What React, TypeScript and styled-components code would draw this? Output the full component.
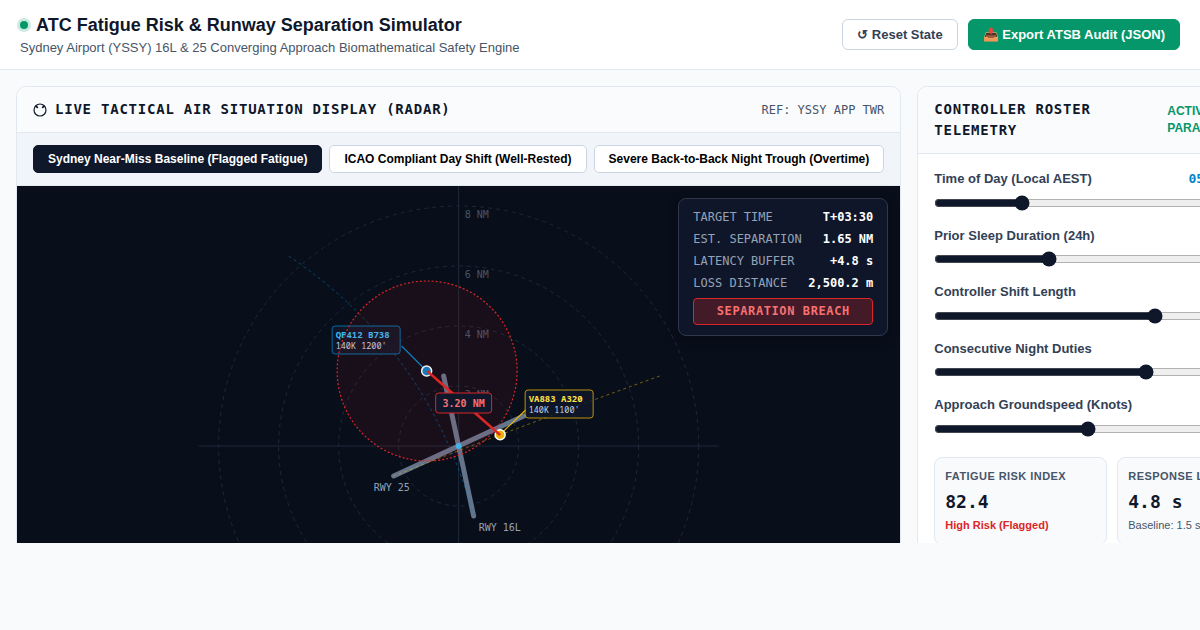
import React from "react";
import styled, { createGlobalStyle } from "styled-components";

const sans = `"Liberation Sans", Arial, sans-serif`;
const mono = `"DejaVu Sans Mono", monospace`;
const tagMono = `"Noto Sans Mono", "DejaVu Sans Mono", monospace`;

const GlobalStyle = createGlobalStyle`
  * { box-sizing: border-box; }
  body {
    margin: 0;
    background: #f8fafc;
    color: #0f172a;
    font-family: ${sans};
    line-height: 1.5;
    overflow: hidden;
  }
`;

const Page = styled.div`
  display: flex;
  flex-direction: column;
  height: 100vh;
  padding-bottom: 87px;
`;

const TopBar = styled.header`
  display: flex;
  align-items: center;
  justify-content: space-between;
  padding: 12px 20px;
  background: #ffffff;
  border-bottom: 1px solid #e2e8f0;
`;

const Brand = styled.div`
  padding-top: 1px;
`;

const Title = styled.h1`
  display: flex;
  align-items: center;
  gap: 8px;
  margin: 0;
  font-size: 18px;
  line-height: 24px;
`;

const StatusDot = styled.span`
  width: 8px;
  height: 8px;
  border-radius: 50%;
  background: #059669;
  box-shadow: 0 0 0 3px rgba(5, 150, 105, 0.2);
`;

const Subtitle = styled.p`
  margin: 2px 0 0;
  font-size: 13px;
  line-height: 18px;
  color: #475569;
`;

const Actions = styled.div`
  display: flex;
  gap: 10px;
`;

const ActionButton = styled.button<{ $primary?: boolean }>`
  padding: 7px 14px;
  border: 1px solid ${(p) => (p.$primary ? "#059669" : "#cbd5e1")};
  border-radius: 6px;
  background: ${(p) => (p.$primary ? "#059669" : "#ffffff")};
  color: ${(p) => (p.$primary ? "#ffffff" : "#334155")};
  font: bold 13px ${sans};
`;

const Workspace = styled.main`
  display: grid;
  grid-template-columns: minmax(max-content, 1fr) 390px;
  align-items: start;
  gap: 16px;
  flex: 1;
  min-height: 0;
  padding: 16px;
  overflow: hidden;
`;

const Panel = styled.section`
  background: #ffffff;
  border: 1px solid #e2e8f0;
  border-radius: 10px;
  overflow: hidden;
`;

const PanelHeader = styled.div`
  display: flex;
  align-items: center;
  justify-content: space-between;
  padding: 12px 16px;
  background: #fafbfd;
  border-bottom: 1px solid #e2e8f0;
`;

const PanelTitle = styled.h2`
  display: flex;
  align-items: center;
  gap: 8px;
  margin: 0;
  font: bold 14px/21px ${mono};
  letter-spacing: 0.055em;
`;

const PanelRef = styled.span`
  font: 12px/18px ${mono};
  color: #475569;
`;

const ActiveTag = styled.span`
  flex: 0 0 123px;
  font-size: 12px;
  line-height: 17px;
  font-weight: bold;
  color: #059669;
`;

const PresetBar = styled.div`
  display: flex;
  gap: 7px;
  padding: 12px 16px;
  background: #f1f5f9;
  border-bottom: 1px solid #e2e8f0;
`;

const PresetButton = styled.button<{ $active?: boolean }>`
  padding: 6px 14px;
  border: 1px solid ${(p) => (p.$active ? "#0f172a" : "#cbd5e1")};
  border-radius: 5px;
  background: ${(p) => (p.$active ? "#0f172a" : "#ffffff")};
  color: ${(p) => (p.$active ? "#ffffff" : "#000000")};
  font: bold 12px ${sans};
  white-space: nowrap;
`;

const RadarView = styled.div`
  position: relative;
  background: #080e1a;
`;

const RadarSvg = styled.svg`
  display: block;
  width: 100%;
  height: 520px;
  font-family: ${mono};
`;

const Hud = styled.div`
  position: absolute;
  top: 12px;
  right: 12px;
  display: flex;
  flex-direction: column;
  gap: 4px;
  width: 210px;
  padding: 9px 14px 10px;
  border: 1px solid #2f394b;
  border-radius: 8px;
  background: #0f1629;
  box-shadow: 0 4px 12px rgba(0, 0, 0, 0.3);
  font: 12px/18px ${mono};
`;

const HudRow = styled.div`
  display: flex;
  justify-content: space-between;
  color: #94a3b8;
`;

const HudValue = styled.strong`
  color: #ffffff;
`;

const BreachBadge = styled.div`
  margin-top: 2px;
  padding: 4px 8px;
  border: 1px solid #dc2626;
  border-radius: 4px;
  background: rgba(220, 38, 38, 0.25);
  color: #f87171;
  font-weight: bold;
  line-height: 17px;
  letter-spacing: 0.05em;
  text-align: center;
`;

const Controls = styled.div`
  display: flex;
  flex-direction: column;
  gap: 20px;
  padding: 15px 16px 16px;
`;

const SliderList = styled.div`
  display: flex;
  flex-direction: column;
  gap: 15px;
`;

const SliderField = styled.label`
  display: flex;
  flex-direction: column;
  gap: 6px;
  font-size: 13px;
  font-weight: bold;
  color: #334155;
`;

const SliderHead = styled.span`
  display: flex;
  justify-content: space-between;
  height: 1.5em;
`;

const SliderValue = styled.span`
  font-family: ${mono};
  color: #0284c7;
`;

const Slider = styled.input`
  width: 100%;
  height: 16px;
  margin: 0;
  accent-color: #0f172a;
`;

const StatGrid = styled.div`
  display: grid;
  grid-template-columns: 1fr 1fr;
  gap: 10px;
`;

const StatCard = styled.div`
  padding: 10px;
  border: 1px solid #e2e8f0;
  border-radius: 8px;
  background: #f8fafc;
  font-size: 11px;
  white-space: nowrap;
`;

const StatLabel = styled.div`
  font-weight: bold;
  color: #475569;
  letter-spacing: 0.04em;
`;

const StatValue = styled.div`
  margin: 4px 0 2px;
  font: bold 18px/27px ${mono};
`;

const StatNote = styled.div<{ $alert?: boolean }>`
  font-weight: ${(p) => (p.$alert ? "bold" : "normal")};
  color: ${(p) => (p.$alert ? "#dc2626" : "#475569")};
`;

const presets = [
  "Sydney Near-Miss Baseline (Flagged Fatigue)",
  "ICAO Compliant Day Shift (Well-Rested)",
  "Severe Back-to-Back Night Trough (Overtime)",
];

const readouts = [
  ["TARGET TIME", "T+03:30"],
  ["EST. SEPARATION", "1.65 NM"],
  ["LATENCY BUFFER", "+4.8 s"],
  ["LOSS DISTANCE", "2,500.2 m"],
];

const sliders = [
  { label: "Time of Day (Local AEST)", text: "05:30 (Night)", min: 0, max: 23.5, step: 0.5, value: 5.5 },
  { label: "Prior Sleep Duration (24h)", text: "4.5 h", min: 2, max: 10, step: 0.5, value: 4.5 },
  { label: "Controller Shift Length", text: "9.0 h", min: 4, max: 12, step: 0.5, value: 9 },
  { label: "Consecutive Night Duties", text: "3", min: 0, max: 5, step: 1, value: 3 },
  { label: "Approach Groundspeed (Knots)", text: "140 kt", min: 110, max: 180, step: 5, value: 140 },
];

const RadarIcon = () => (
  <svg width="14" height="14" viewBox="0 0 14 14" fill="none" stroke="#0f172a">
    <circle cx="7" cy="7" r="6" strokeWidth="1.2" />
    <path d="M2.8 2.8 4.8 4.8M11.2 2.8 9.2 4.8" strokeWidth="1.7" />
  </svg>
);

const Radar = () => (
  <RadarSvg viewBox="0 0 520 520" role="img" aria-label="Radar display">
    <g fill="none" stroke="#1e293b" strokeWidth="1">
      {[60, 120, 180, 240].map((r) => (
        <circle key={r} cx="260" cy="260" r={r} strokeDasharray="4 4" />
      ))}
      <path d="M0 260H520M260 0V520" />
    </g>
    <g fill="#475569" fontSize="10">
      <text x="266" y="32">8 NM</text>
      <text x="266" y="92">6 NM</text>
      <text x="266" y="152">4 NM</text>
      <text x="266" y="212">2 NM</text>
    </g>
    <g stroke="#64748b" strokeWidth="5" strokeLinecap="round">
      <path d="M245 190L275 330" />
      <path d="M195 290L325 230" />
    </g>
    <g fill="#94a3b8" fontSize="10">
      <text x="280" y="345">RWY 16L</text>
      <text x="175" y="305">RWY 25</text>
    </g>
    <g fill="none" strokeWidth="1" strokeDasharray="3 3">
      <path d="M90 70Q230 164 275 330" stroke="#0284c7" opacity="0.5" />
      <path d="M461 190Q330 237 195 290" stroke="#eab308" opacity="0.5" />
    </g>
    <circle cx="260" cy="260" r="3" fill="#38bdf8" />
    <g fontSize="9" fontFamily={tagMono}>
      <path d="M228 185L203 160" stroke="#0284c7" strokeWidth="1.2" />
      <rect x="133.5" y="140" width="68" height="28" rx="3" fill="#0f172a" stroke="#0284c7" opacity="0.8" />
      <text x="137" y="152" fill="#38bdf8" fontWeight="bold">QF412 B738</text>
      <text x="137" y="163" fill="#cbd5e1" fontSize="8.5">140K 1200'</text>
      <path d="M301 249L327 224" stroke="#eab308" strokeWidth="1.2" />
      <rect x="326.5" y="204" width="68" height="28" rx="3" fill="#0f172a" stroke="#eab308" opacity="0.8" />
      <text x="330" y="216" fill="#fde047" fontWeight="bold">VA883 A320</text>
      <text x="330" y="227" fill="#cbd5e1" fontSize="8.5">140K 1100'</text>
    </g>
    <circle cx="228" cy="185" r="5" fill="#0284c7" stroke="#fff" strokeWidth="1.5" />
    <circle cx="301.5" cy="248.7" r="5" fill="#eab308" stroke="#fff" strokeWidth="1.5" />
    <circle cx="228.5" cy="185" r="90" fill="#dc2626" fillOpacity="0.08" stroke="#dc2626" strokeWidth="1.2" strokeDasharray="2 2" />
    <path d="M228.5 185L301.5 249" stroke="#dc2626" strokeWidth="2.5" />
    <rect x="237" y="207" width="56" height="20" rx="3" fill="#0f172a" stroke="#dc2626" />
    <text x="265" y="221" fill="#f87171" fontSize="10" fontWeight="bold" textAnchor="middle">3.20 NM</text>
  </RadarSvg>
);

export default function App() {
  return (
    <Page>
      <GlobalStyle />
      <TopBar>
        <Brand>
          <Title>
            <StatusDot />
            ATC Fatigue Risk &amp; Runway Separation Simulator
          </Title>
          <Subtitle>Sydney Airport (YSSY) 16L &amp; 25 Converging Approach Biomathematical Safety Engine</Subtitle>
        </Brand>
        <Actions>
          <ActionButton>↺ Reset State</ActionButton>
          <ActionButton $primary>📥 Export ATSB Audit (JSON)</ActionButton>
        </Actions>
      </TopBar>
      <Workspace>
        <Panel>
          <PanelHeader>
            <PanelTitle>
              <RadarIcon />
              LIVE TACTICAL AIR SITUATION DISPLAY (RADAR)
            </PanelTitle>
            <PanelRef>REF: YSSY APP TWR</PanelRef>
          </PanelHeader>
          <PresetBar>
            {presets.map((name, i) => (
              <PresetButton key={name} $active={i === 0}>{name}</PresetButton>
            ))}
          </PresetBar>
          <RadarView>
            <Radar />
            <Hud>
              {readouts.map(([name, value]) => (
                <HudRow key={name}>
                  {name}
                  <HudValue>{value}</HudValue>
                </HudRow>
              ))}
              <BreachBadge>SEPARATION BREACH</BreachBadge>
            </Hud>
          </RadarView>
        </Panel>
        <Panel>
          <PanelHeader>
            <PanelTitle>CONTROLLER ROSTER TELEMETRY</PanelTitle>
            <ActiveTag>ACTIVE SHIFT PARAMETERS</ActiveTag>
          </PanelHeader>
          <Controls>
            <SliderList>
              {sliders.map((s) => (
                <SliderField key={s.label}>
                  <SliderHead>
                    {s.label}
                    <SliderValue>{s.text}</SliderValue>
                  </SliderHead>
                  <Slider type="range" min={s.min} max={s.max} step={s.step} defaultValue={s.value} />
                </SliderField>
              ))}
            </SliderList>
            <StatGrid>
              <StatCard>
                <StatLabel>FATIGUE RISK INDEX</StatLabel>
                <StatValue>82.4</StatValue>
                <StatNote $alert>High Risk (Flagged)</StatNote>
              </StatCard>
              <StatCard>
                <StatLabel>RESPONSE LATENCY</StatLabel>
                <StatValue>4.8 s</StatValue>
                <StatNote>Baseline: 1.5 s</StatNote>
              </StatCard>
            </StatGrid>
          </Controls>
        </Panel>
      </Workspace>
    </Page>
  );
}
